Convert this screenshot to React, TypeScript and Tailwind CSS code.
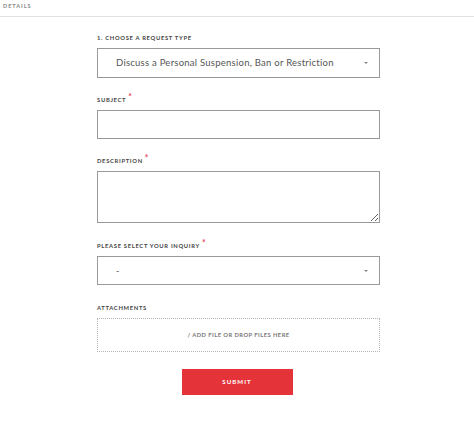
import React from "react";

const font = { fontFamily: "Lato, 'Open Sans', 'Liberation Sans', sans-serif" };

function Label({ text, required }: { text: string; required?: boolean }) {
  return (
    <div className="h-[10px] pt-[2px] flex items-center text-[5.8px] font-bold tracking-[0.7px] text-[#444] uppercase leading-none">
      <span>{text}</span>
      {required && <span className="text-[#e4405a] text-[8.5px] ml-[2px] -mt-[6px]">*</span>}
    </div>
  );
}

function Arrow() {
  return (
    <span className="w-0 h-0 border-l-[2px] border-r-[2px] border-t-[2.5px] border-l-transparent border-r-transparent border-t-[#888]" />
  );
}

export default function App() {
  return (
    <div className="w-[474px] h-[425px] bg-white" style={font}>
      <div className="h-[17px] border-b border-[#e2e2e2] pl-[3px] pt-[3px] text-[5.5px] font-bold tracking-[1px] text-[#888] leading-[6px]">
        DETAILS
      </div>

      <div className="ml-[97px] w-[283px] pt-[15px]">
        <Label text="1. Choose a request type" />
        <div className="mt-[6px] h-[30px] border border-[#999] flex items-center justify-between pl-[18px] pr-[11px]">
          <span className="text-[9.5px] tracking-[0.25px] text-[#555]">
            Discuss a Personal Suspension, Ban or Restriction
          </span>
          <Arrow />
        </div>

        <div className="mt-[16px]">
          <Label text="Subject" required />
        </div>
        <input className="block mt-[6px] w-full h-[29px] border border-[#999] outline-none" />

        <div className="mt-[16px]">
          <Label text="Description" required />
        </div>
        <textarea className="block mt-[6px] w-full h-[52px] border border-[#999] outline-none resize-y" />

        <div className="mt-[17px]">
          <Label text="Please select your inquiry" required />
        </div>
        <div className="mt-[6px] h-[29px] border border-[#999] flex items-center justify-between pl-[18px] pr-[11px]">
          <span className="text-[9px] text-[#555]">-</span>
          <Arrow />
        </div>

        <div className="mt-[17px]">
          <Label text="Attachments" />
        </div>
        <div className="mt-[6px] h-[34px] border border-dotted border-[#b5b5b5] flex items-center justify-center text-[5.8px] font-bold tracking-[0.45px] text-[#777]">
          / ADD FILE OR DROP FILES HERE
        </div>

        <div className="flex justify-center mt-[17px] pr-[3px]">
          <button className="w-[111px] h-[26px] bg-[#e5333a] text-white text-[6.2px] font-bold tracking-[1px]">
            SUBMIT
          </button>
        </div>
      </div>
    </div>
  );
}
